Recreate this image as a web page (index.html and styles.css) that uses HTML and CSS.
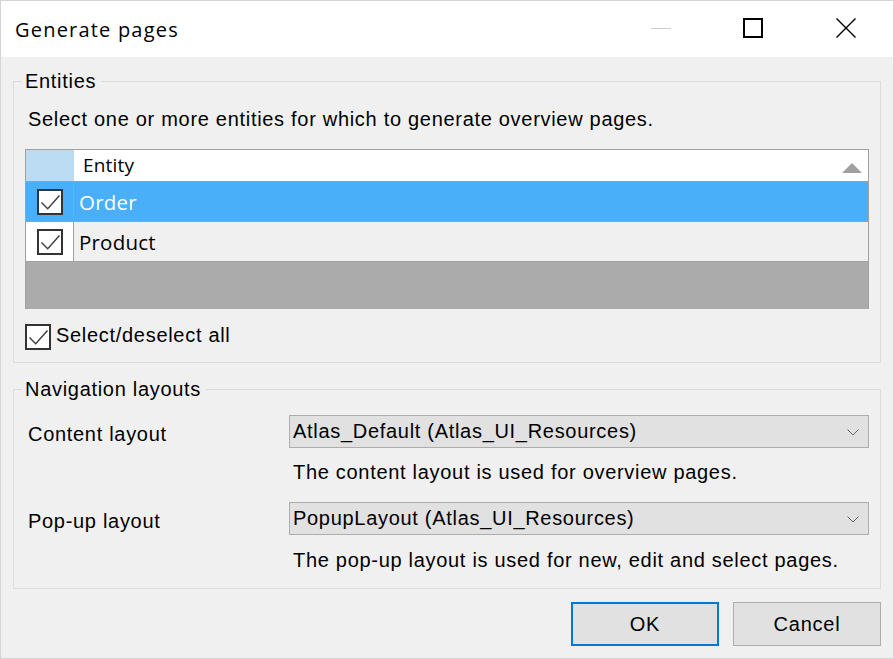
FILE: index.html
```html
<!DOCTYPE html>
<html lang="en">
<head>
<meta charset="utf-8">
<title>Generate pages</title>
<link rel="stylesheet" href="styles.css">
</head>
<body>
<div class="window">
  <div class="titlebar">
    <span class="title">Generate pages</span>
    <div class="caption-buttons">
      <div class="cap-btn">
        <svg width="20" height="20" viewBox="0 0 20 20"><line x1="0" y1="10.5" x2="20" y2="10.5" stroke="#cccccc" stroke-width="1"/></svg>
      </div>
      <div class="cap-btn">
        <svg width="20" height="20" viewBox="0 0 20 20"><rect x="1" y="1" width="18" height="18" fill="none" stroke="#000" stroke-width="2"/></svg>
      </div>
      <div class="cap-btn close">
        <svg width="20" height="20" viewBox="0 0 20 20"><path d="M0.5 0.5 L19.5 19.5 M19.5 0.5 L0.5 19.5" stroke="#000" stroke-width="1.4" fill="none"/></svg>
      </div>
    </div>
  </div>

  <div class="content">
    <fieldset class="group entities">
      <legend>Entities</legend>
      <p class="hint">Select one or more entities for which to generate overview pages.</p>
      <div class="grid">
        <div class="grid-head">
          <div class="head-sel"></div>
          <div class="head-name">Entity</div>
          <svg class="sort" width="20" height="10" viewBox="0 0 20 10"><polygon points="10,0 20,10 0,10" fill="#a0a0a0"/></svg>
        </div>
        <div class="grid-row selected">
          <div class="cell-sel">
            <svg class="checkbox" width="26" height="26" viewBox="0 0 26 26"><rect x="1" y="1" width="24" height="24" fill="#fff" stroke="#333" stroke-width="2"/><path d="M4.5 13.5 L10.7 19.8 L22.5 6.5" fill="none" stroke="#3c3c3c" stroke-width="1.4"/></svg>
          </div>
          <div class="cell-name">Order</div>
        </div>
        <div class="grid-row">
          <div class="cell-sel">
            <svg class="checkbox" width="26" height="26" viewBox="0 0 26 26"><rect x="1" y="1" width="24" height="24" fill="#fff" stroke="#333" stroke-width="2"/><path d="M4.5 13.5 L10.7 19.8 L22.5 6.5" fill="none" stroke="#3c3c3c" stroke-width="1.4"/></svg>
          </div>
          <div class="cell-name">Product</div>
        </div>
        <div class="grid-empty"></div>
      </div>
      <label class="check-all">
        <svg class="checkbox" width="26" height="26" viewBox="0 0 26 26"><rect x="1" y="1" width="24" height="24" fill="#fff" stroke="#333" stroke-width="2"/><path d="M4.5 13.5 L10.7 19.8 L22.5 6.5" fill="none" stroke="#3c3c3c" stroke-width="1.4"/></svg>
        <span>Select/deselect all</span>
      </label>
    </fieldset>

    <fieldset class="group navigation">
      <legend>Navigation layouts</legend>
      <div class="layout-form">
        <div class="field-label">Content layout</div>
        <div class="combo">
          <span class="combo-text">Atlas_Default (Atlas_UI_Resources)</span>
          <svg class="chevron" width="12" height="7" viewBox="0 0 12 7"><path d="M0.5 0.5 L6 6 L11.5 0.5" fill="none" stroke="#666" stroke-width="1"/></svg>
        </div>
        <div class="field-desc">The content layout is used for overview pages.</div>

        <div class="field-label second">Pop-up layout</div>
        <div class="combo second">
          <span class="combo-text">PopupLayout (Atlas_UI_Resources)</span>
          <svg class="chevron" width="12" height="7" viewBox="0 0 12 7"><path d="M0.5 0.5 L6 6 L11.5 0.5" fill="none" stroke="#666" stroke-width="1"/></svg>
        </div>
        <div class="field-desc last">The pop-up layout is used for new, edit and select pages.</div>
      </div>
    </fieldset>

    <div class="buttons">
      <button class="btn primary">OK</button>
      <button class="btn">Cancel</button>
    </div>
  </div>
</div>
</body>
</html>
```

FILE: styles.css
```css
* {
  box-sizing: border-box;
}

html,
body {
  margin: 0;
  padding: 0;
}

body {
  width: 894px;
  height: 659px;
  overflow: hidden;
  font-family: "Liberation Sans", Arial, sans-serif;
  font-size: 20px;
  letter-spacing: 0.7px;
  color: #000;
  background: #f0f0f0;
}

.window {
  width: 894px;
  height: 659px;
  border: 1px solid #d4d4d4;
  background: #f0f0f0;
  display: flex;
  flex-direction: column;
}

/* Title bar */
.titlebar {
  height: 56px;
  flex: none;
  background: #fff;
  display: flex;
}

.title {
  font-family: "Open Sans", "Noto Sans", sans-serif;
  font-size: 20px;
  letter-spacing: 1.2px;
  line-height: 26px;
  padding: 16px 0 0 14px;
}

.caption-buttons {
  margin-left: auto;
  display: flex;
}

.cap-btn {
  width: 92px;
  display: flex;
  justify-content: center;
  padding-top: 17px;
}

.cap-btn.close {
  width: 94px;
}

.cap-btn svg {
  display: block;
}

/* Content */
.content {
  flex: 1;
  padding: 0 12px;
}

.group {
  margin: 0;
  min-width: 0;
  border: 1px solid #dcdcdc;
  padding: 0 11px 12px 11px;
}

.group legend {
  font-size: 20px;
  line-height: 22px;
  margin-left: -3px;
  padding: 0 5px 0 3px;
}

.entities {
  margin-top: 13px;
}

.hint {
  margin: 15px 0 0;
  padding-left: 3px;
  line-height: 24px;
}

/* Grid */
.grid {
  margin-top: 18px;
  border: 1px solid #a0a0a0;
  border-bottom: 0;
  background: #fff;
  font-family: "Open Sans", "Noto Sans", sans-serif;
  letter-spacing: 0.2px;
}

.grid-head {
  height: 32px;
  display: flex;
  border-bottom: 1px solid #a0a0a0;
}

.head-sel {
  width: 48px;
  background: #bcdcf4;
}

.head-name {
  padding-left: 9px;
  font-size: 19px;
  line-height: 31px;
}

.sort {
  margin-left: auto;
  margin-right: 6px;
  align-self: flex-end;
  margin-bottom: 8px;
}

.grid-row {
  height: 40px;
  display: flex;
  border-bottom: 1px solid #a0a0a0;
  background: #f0f0f0;
}

.cell-sel {
  width: 48px;
  border-right: 1px solid #a0a0a0;
  background: #fff;
  display: flex;
  align-items: center;
  justify-content: center;
}

.grid-row.selected,
.grid-row.selected .cell-sel {
  background: #48aff8;
}

.cell-name {
  padding: 2px 0 0 5px;
  font-size: 20.5px;
  line-height: 37px;
}

.grid-row.selected .cell-name {
  color: #fff;
}

.checkbox {
  display: block;
  flex: none;
}

.grid-empty {
  height: 47px;
  background: #ababab;
}

.check-all {
  margin-top: 15px;
  display: flex;
  align-items: flex-start;
  gap: 5px;
}

.check-all span {
  line-height: 22px;
}

/* Navigation layouts */
.navigation {
  margin-top: 15px;
  padding-bottom: 16px;
}

.layout-form {
  display: grid;
  grid-template-columns: 264px 1fr;
  padding-top: 15px;
}

.field-label {
  padding: 7px 0 0 3px;
  line-height: 24px;
}

.combo {
  height: 33px;
  border: 1px solid #adadad;
  background: #e1e1e1;
  display: flex;
  align-items: center;
  padding-left: 3px;
}

.combo-text {
  line-height: 31px;
}

.chevron {
  display: block;
  margin-left: auto;
  margin-right: 9px;
  margin-top: 2px;
}

.field-label.second,
.combo.second {
  margin-top: 18px;
}

.field-desc {
  grid-column: 2;
  margin-top: 12px;
  padding-left: 4px;
  line-height: 24px;
}

.field-desc.last {
  margin-top: 13px;
}

/* Buttons */
.buttons {
  display: flex;
  justify-content: flex-end;
  gap: 14px;
  margin-top: 13px;
}

.btn {
  width: 148px;
  height: 44px;
  margin: 0;
  padding: 0;
  background: #e1e1e1;
  border: 1px solid #adadad;
  font-family: "Liberation Sans", Arial, sans-serif;
  font-size: 20px;
  letter-spacing: 0.8px;
  color: #000;
}

.btn.primary {
  border: 2px solid #0078d7;
}
```
